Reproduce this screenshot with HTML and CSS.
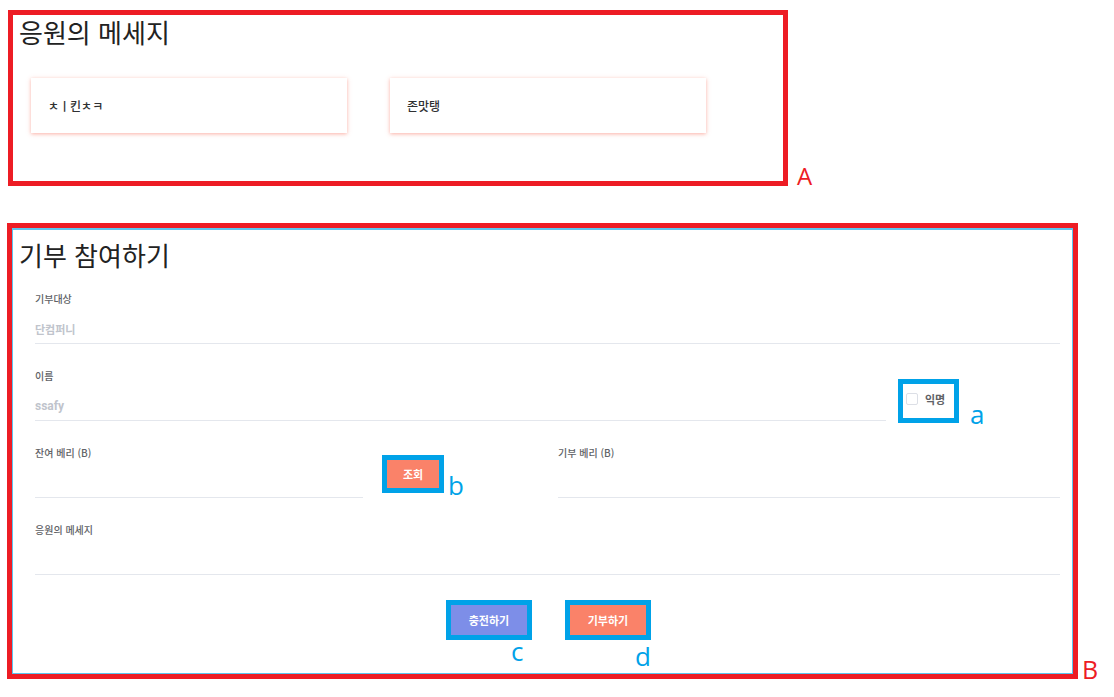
FILE: index.html
```html
<!DOCTYPE html>
<html lang="ko">
<head>
<meta charset="utf-8">
<title>기부 참여하기</title>
<link rel="stylesheet" href="styles.css">
</head>
<body>
<section class="panel panel-a">
  <h2 class="title">응원의 메세지</h2>
  <div class="cards">
    <div class="card">ㅊㅣ킨ㅊㅋ</div>
    <div class="card">존맛탱</div>
  </div>
  <span class="tag tag-red tag-A">A</span>
</section>

<section class="panel panel-b">
  <h2 class="title">기부 참여하기</h2>
  <form class="form">
    <div class="field">
      <label class="label">기부대상</label>
      <div class="input placeholder">단컴퍼니</div>
    </div>
    <div class="row">
      <div class="field field-name">
        <label class="label">이름</label>
        <div class="input placeholder latin">ssafy</div>
      </div>
      <div class="mark mark-check">
        <span class="checkbox"></span>
        <span class="check-label">익명</span>
        <span class="tag tag-blue tag-a">a</span>
      </div>
    </div>
    <div class="row">
      <div class="field field-remain">
        <label class="label">잔여 베리 (B)</label>
        <div class="input"></div>
      </div>
      <div class="mark mark-query">
        <button type="button" class="btn btn-orange btn-small">조회</button>
        <span class="tag tag-blue tag-b">b</span>
      </div>
      <div class="field field-give">
        <label class="label">기부 베리 (B)</label>
        <div class="input"></div>
      </div>
    </div>
    <div class="field">
      <label class="label">응원의 메세지</label>
      <div class="input"></div>
    </div>
    <div class="actions">
      <div class="mark">
        <button type="button" class="btn btn-blue">충전하기</button>
        <span class="tag tag-blue tag-c">c</span>
      </div>
      <div class="mark">
        <button type="button" class="btn btn-orange">기부하기</button>
        <span class="tag tag-blue tag-d">d</span>
      </div>
    </div>
  </form>
  <span class="tag tag-red tag-B">B</span>
</section>
</body>
</html>
```

FILE: styles.css
```css
body {
  margin: 0;
  background: #fff;
  color: #303133;
  font-family: "Noto Sans CJK KR", "Noto Sans", sans-serif;
}

.panel {
  position: relative;
  box-sizing: border-box;
  border: 5px solid #ed1c24;
}

.panel-a {
  margin: 10px 0 0 8px;
  width: 780px;
  height: 176px;
  padding: 1px 6px 0;
}

.panel-b {
  margin: 37px 0 0 7px;
  width: 1071px;
  height: 456px;
  padding: 11px 13px 0 7px;
  box-shadow: inset 0 0 0 1px #5cc4ee, inset 0 1px 0 1px #5cc4ee;
}

.title {
  margin: 0;
  font-size: 26px;
  line-height: 32px;
  font-weight: 400;
  color: #222;
}

.cards {
  display: flex;
  gap: 43px;
  margin-top: 30px;
  padding-left: 12px;
}

.card {
  box-sizing: border-box;
  width: 316px;
  height: 55px;
  display: flex;
  align-items: center;
  padding: 0 17px;
  font-size: 12px;
  font-weight: 500;
  color: #303133;
  background: #fff;
  box-shadow: 0 1px 4px rgba(248, 110, 90, 0.55);
}

.form {
  margin-top: 20px;
  padding-left: 16px;
  display: flex;
  flex-direction: column;
  gap: 24px;
}

.row {
  display: flex;
  align-items: flex-start;
}

.label {
  display: block;
  font-size: 10px;
  line-height: 16px;
  font-weight: 500;
  color: #606266;
}

.input {
  height: 28px;
  padding-top: 8px;
  line-height: 28px;
  border-bottom: 1px solid #e4e7ed;
  font-size: 11px;
  font-weight: 700;
}

.placeholder {
  color: #c0c4cc;
}

.latin {
  font-family: Roboto, "Noto Sans CJK KR", sans-serif;
  font-size: 12px;
}

.field-name {
  width: 851px;
}

.field-remain {
  width: 328px;
}

.field-give {
  width: 502px;
  margin-left: auto;
}

.mark {
  position: relative;
  border: 5px solid #00a2e8;
}

.mark-check {
  margin: 11px 0 -2px 12px;
  width: 51px;
  height: 34px;
  display: flex;
  align-items: flex-start;
}

.checkbox {
  box-sizing: border-box;
  width: 12px;
  height: 12px;
  margin: 9px 0 0 3px;
  border: 1px solid #dcdfe6;
  border-radius: 2px;
  background: #fff;
}

.check-label {
  margin: 8px 0 0 7px;
  font-size: 11px;
  line-height: 14px;
  font-weight: 700;
  color: #606266;
}

.mark-query {
  margin: 10px 0 0 19px;
}

.btn {
  display: flex;
  align-items: center;
  justify-content: center;
  width: 76px;
  height: 30px;
  padding: 0;
  border: none;
  border-radius: 0;
  color: #fff;
  font-family: "Noto Sans CJK KR", sans-serif;
  font-size: 11px;
  font-weight: 700;
}

.btn-small {
  width: 52px;
  height: 28px;
}

.btn-orange {
  background: #fa8269;
}

.btn-blue {
  background: #7d8ee8;
}

.actions {
  display: flex;
  justify-content: center;
  gap: 33px;
  margin-top: 1px;
  padding-left: 2px;
}

.tag {
  position: absolute;
  font-family: "Open Sans", sans-serif;
  font-weight: 400;
  line-height: 1;
}

.tag-red {
  color: #ed1c24;
  font-size: 24px;
}

.tag-blue {
  color: #00a2e8;
  font-size: 26px;
}

.tag-A {
  left: calc(100% + 14px);
  top: 149px;
}

.tag-B {
  left: calc(100% + 9px);
  top: 429px;
  font-size: 25px;
}

.tag-a {
  left: calc(100% + 16px);
  top: 17px;
}

.tag-b {
  left: calc(100% + 9px);
  top: 12px;
}

.tag-c {
  left: 60px;
  top: 33px;
}

.tag-d {
  left: 65px;
  top: 38px;
}
```
